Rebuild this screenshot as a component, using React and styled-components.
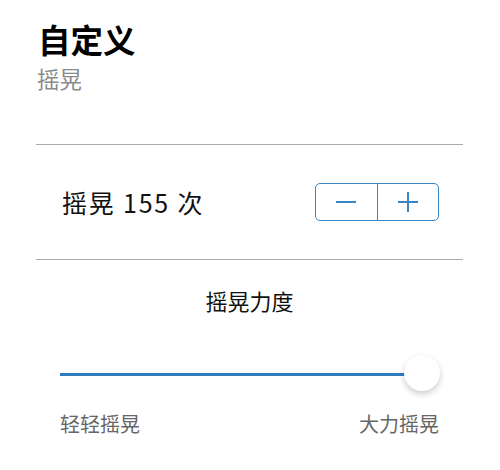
import React, { useState } from "react";
import styled, { createGlobalStyle } from "styled-components";

const GlobalStyle = createGlobalStyle`
  body {
    margin: 0;
    background: #fff;
    font-family: "Noto Sans CJK SC", "Noto Sans", sans-serif;
  }
`;

const Page = styled.div`
  width: 500px;
  height: 470px;
  padding: 0 37px 0 36px;
  box-sizing: border-box;
  background: #fff;
`;

const Header = styled.div`
  padding: 15px 0 0 2px;
  height: 144px;
  box-sizing: border-box;
`;

const Title = styled.h1`
  margin: 0;
  font-size: 32.5px;
  line-height: 47px;
  font-weight: 700;
  color: #000;
`;

const Subtitle = styled.div`
  font-size: 22.5px;
  line-height: 33px;
  color: #8a8a8a;
  margin-left: -1px;
`;

const Divider = styled.hr`
  margin: 0;
  border: none;
  height: 1px;
  background: #a9a9a9;
`;

const CountRow = styled.div`
  height: 114px;
  display: flex;
  align-items: center;
  justify-content: space-between;
  padding: 0 24px 0 26px;
`;

const CountLabel = styled.span`
  font-size: 25px;
  color: #111;
  letter-spacing: 1.8px;
`;

const Stepper = styled.div`
  display: flex;
  width: 124px;
  height: 38px;
  box-sizing: border-box;
  border: 1.5px solid #3a85c4;
  border-radius: 5px;
  overflow: hidden;
`;

const StepButton = styled.button`
  flex: 1;
  border: none;
  background: transparent;
  display: flex;
  align-items: center;
  justify-content: center;
  padding: 0;
  cursor: pointer;
  & + & {
    border-left: 1.5px solid #3a85c4;
  }
`;

const Section = styled.div`
  padding: 0 24px;
`;

const SectionTitle = styled.div`
  text-align: center;
  font-size: 22px;
  color: #111;
  margin-top: 25px;
  line-height: 30px;
`;

const Slider = styled.div`
  position: relative;
  margin-top: 39px;
  height: 40px;
  display: flex;
  align-items: center;
`;

const Track = styled.div`
  height: 3px;
  background: #2f7bbf;
  flex: 1;
  margin-right: 18px;
`;

const Thumb = styled.div`
  position: absolute;
  right: -1px;
  top: 1px;
  width: 36px;
  height: 36px;
  border-radius: 50%;
  background: #fff;
  box-shadow: 0 3px 6px rgba(0, 0, 0, 0.2);
`;

const Ends = styled.div`
  display: flex;
  justify-content: space-between;
  margin-top: 16px;
  font-size: 20px;
  line-height: 28px;
  color: #666;
`;

const Minus = () => (
  <svg width="22" height="22" viewBox="0 0 22 22">
    <path d="M1 11h20" stroke="#3a85c4" strokeWidth="2" />
  </svg>
);

const Plus = () => (
  <svg width="22" height="22" viewBox="0 0 22 22">
    <path d="M1 11h20M11 1v20" stroke="#3a85c4" strokeWidth="2" />
  </svg>
);

export default function App() {
  const [count, setCount] = useState(155);
  return (
    <Page>
      <GlobalStyle />
      <Header>
        <Title>自定义</Title>
        <Subtitle>摇晃</Subtitle>
      </Header>
      <Divider />
      <CountRow>
        <CountLabel>摇晃 {count} 次</CountLabel>
        <Stepper>
          <StepButton onClick={() => setCount((c) => Math.max(0, c - 1))}>
            <Minus />
          </StepButton>
          <StepButton onClick={() => setCount((c) => c + 1)}>
            <Plus />
          </StepButton>
        </Stepper>
      </CountRow>
      <Divider />
      <Section>
        <SectionTitle>摇晃力度</SectionTitle>
        <Slider>
          <Track />
          <Thumb />
        </Slider>
        <Ends>
          <span>轻轻摇晃</span>
          <span>大力摇晃</span>
        </Ends>
      </Section>
    </Page>
  );
}
